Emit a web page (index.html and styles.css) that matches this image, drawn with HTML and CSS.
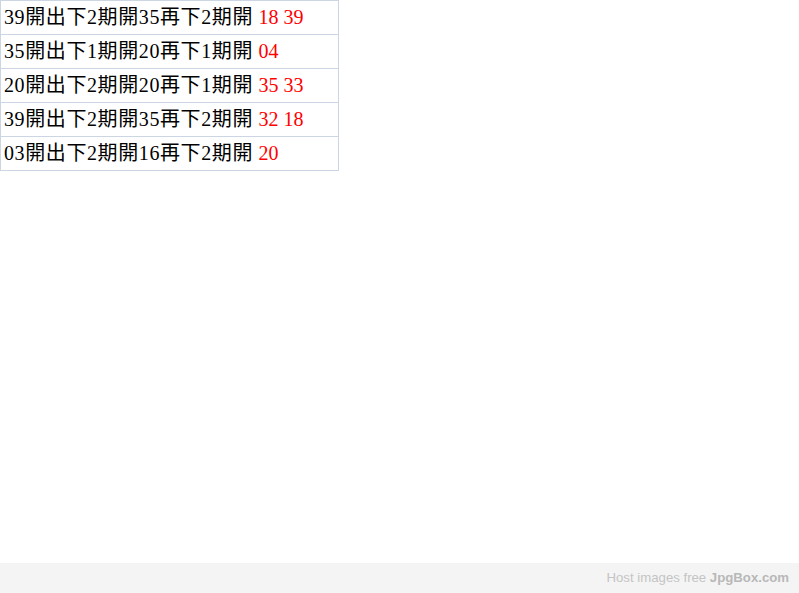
FILE: index.html
```html
<!DOCTYPE html>
<html>
<head>
  <title>開出下期</title>
  <link rel="stylesheet" href="styles.css">
</head>
<body>
  <table class="results">
    <tr><td>39開出下2期開35再下2期開 <span class="hit">18 39</span></td></tr>
    <tr><td>35開出下1期開20再下1期開 <span class="hit">04</span></td></tr>
    <tr><td>20開出下2期開20再下1期開 <span class="hit">35 33</span></td></tr>
    <tr><td>39開出下2期開35再下2期開 <span class="hit">32 18</span></td></tr>
    <tr><td>03開出下2期開16再下2期開 <span class="hit">20</span></td></tr>
  </table>

  <div class="footer">Host images free <b>JpgBox.com</b></div>
</body>
</html>
```

FILE: styles.css
```css
html, body {
  height: 100%;
}

body {
  margin: 0;
  background: #ffffff;
  font-family: "Liberation Serif", "Noto Sans CJK TC", serif;
  display: flex;
  flex-direction: column;
}

.results {
  border-collapse: collapse;
  width: 339px;
  font-size: 20px;
  color: #000;
}

.results td {
  border: 1px solid #cbd5e4;
  padding: 0 3px;
  height: 33px;
  line-height: 33px;
  white-space: nowrap;
  letter-spacing: 0.6px;
}

.hit {
  color: #ff0000;
  letter-spacing: 0;
}

.footer {
  margin-top: auto;
  height: 30px;
  line-height: 30px;
  background: #f4f4f4;
  text-align: right;
  padding-right: 10px;
  font-family: "Liberation Sans", Arial, sans-serif;
  font-size: 13.2px;
  color: #c4c4c4;
}

.footer b {
  color: #b8b8b8;
}
```
